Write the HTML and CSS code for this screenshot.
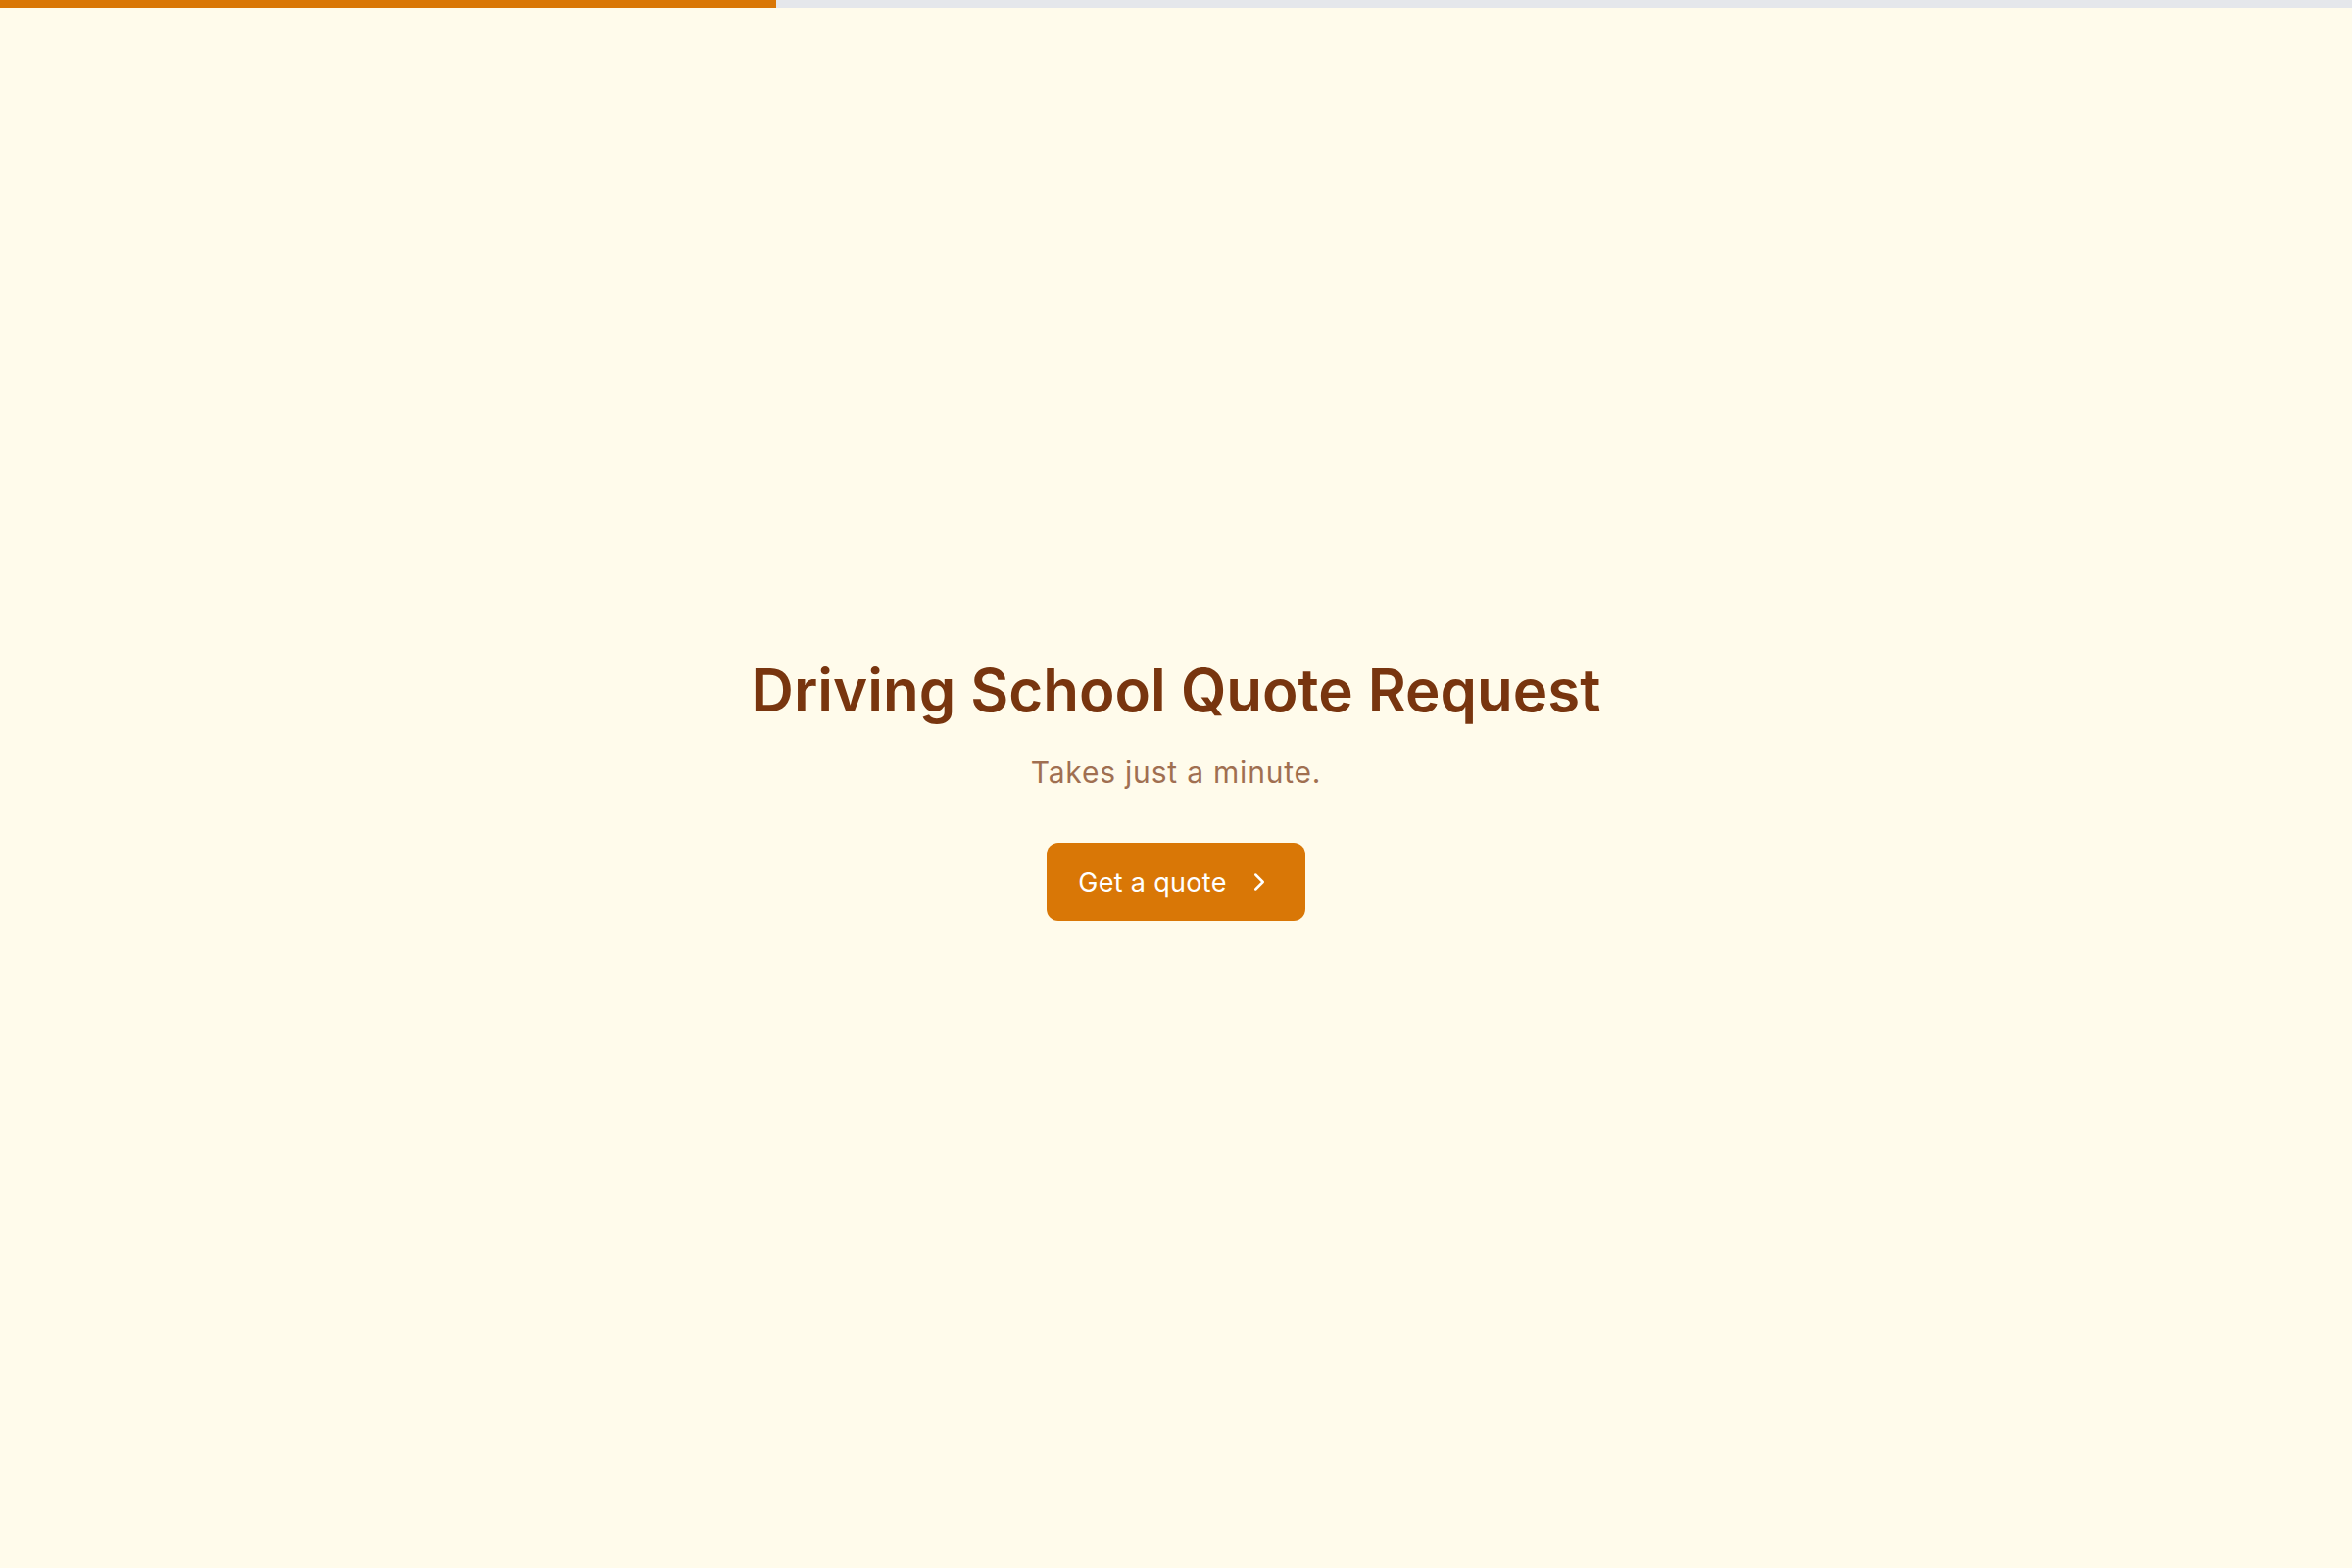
FILE: index.html
```html
<!DOCTYPE html>
<html lang="en">
<head>
    <meta charset="UTF-8">
    <meta name="viewport" content="width=device-width, initial-scale=1.0">
    <title>Driving School Quote Request</title>
    <link rel="stylesheet" href="styles.css">
</head>
<body>
    <div class="progress">
        <div class="progress-bar" style="width: 33%"></div>
    </div>

    <main class="intro">
        <h1>Driving School Quote Request</h1>
        <p class="subtitle">Takes just a minute.</p>
        <button class="start-btn" type="button">
            Get a quote
            <svg class="chevron" viewBox="0 0 24 24" fill="none" stroke="currentColor" stroke-width="2" stroke-linecap="round" stroke-linejoin="round">
                <path d="m9 18 6-6-6-6"/>
            </svg>
        </button>
    </main>
</body>
</html>
```

FILE: styles.css
```css
html, body {
    height: 100%;
}

body {
    font-family: Inter, "Noto Sans", Arial, sans-serif;
    margin: 0;
    padding: 0;
    background-color: #fffbeb;
    display: flex;
    flex-direction: column;
}

.progress {
    height: 8px;
    background-color: #e5e7eb;
    flex-shrink: 0;
}

.progress-bar {
    height: 100%;
    background-color: #d97706;
}

.intro {
    flex: 1;
    display: flex;
    flex-direction: column;
    align-items: center;
    justify-content: center;
    text-align: center;
}

h1 {
    margin: 0;
    font-size: 60px;
    line-height: 72px;
    font-weight: 600;
    color: #78350f;
}

.subtitle {
    margin: 27px 0 0;
    font-size: 30px;
    line-height: 42px;
    letter-spacing: 0.8px;
    color: #78350f;
    opacity: 0.7;
}

.start-btn {
    margin-top: 51px;
    height: 80px;
    padding: 0 32px;
    display: flex;
    align-items: center;
    gap: 18px;
    background-color: #d97706;
    color: white;
    border: none;
    border-radius: 12px;
    font-family: inherit;
    font-size: 27px;
    font-weight: 400;
    letter-spacing: 0.3px;
    cursor: pointer;
}

.start-btn:hover {
    background-color: #b45309;
}

.chevron {
    width: 30px;
    height: 30px;
}
```
